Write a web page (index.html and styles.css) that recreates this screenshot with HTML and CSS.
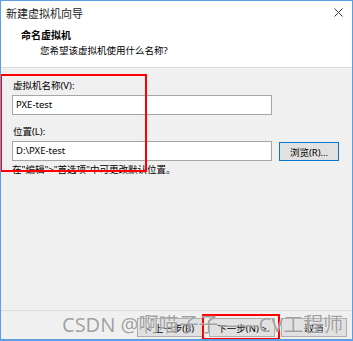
FILE: index.html
```html
<!DOCTYPE html>
<html lang="zh">
<head>
<meta charset="utf-8">
<link rel="stylesheet" href="styles.css">
</head>
<body>
<div class="window">
  <div class="titlebar">
    <span class="title">新建虚拟机向导</span>
    <svg class="close" width="9" height="9" viewBox="0 0 9 9"><path d="M0.5 0.5 L8.5 8.5 M8.5 0.5 L0.5 8.5" stroke="#333" stroke-width="1"/></svg>
  </div>
  <div class="header">
    <div class="h-title">命名虚拟机</div>
    <div class="h-sub">您希望该虚拟机使用什么名称?</div>
  </div>
  <div class="body">
    <div class="label first">虚拟机名称(V):</div>
    <div class="input wide">PXE-test</div>
    <div class="label second">位置(L):</div>
    <div class="row">
      <div class="input wide">D:\PXE-test</div>
      <div class="btn browse">浏览(R)...</div>
    </div>
    <div class="note">在"编辑"&gt;"首选项"中可更改默认位置。</div>
  </div>
  <div class="footer">
    <div class="btn nav">&lt; 上一步(B)</div>
    <div class="btn nav">下一步(N) &gt;</div>
    <div class="btn nav">取消</div>
  </div>
  <div class="mark box1"></div>
  <div class="mark box2"></div>
  <div class="watermark">CSDN @啊喵子子——CV工程师</div>
</div>
</body>
</html>
```
FILE: styles.css
```css
* { box-sizing: border-box; }
html, body { margin: 0; padding: 0; background: #fff; }
body { font-family: "Noto Sans", "Noto Sans CJK SC", sans-serif; font-size: 9.5px; color: #000; }
.window {
  position: relative;
  width: 353px; height: 341px;
  border: 1px solid #5a9fe0;
  border-bottom-width: 2px;
  display: flex; flex-direction: column;
  background: #f0f0f0;
  overflow: hidden;
}
.titlebar {
  height: 23px; background: #fff;
  display: flex; align-items: center; justify-content: space-between;
  padding: 0 9px 0 5px;
}
.title { font-family: "Noto Sans CJK SC", sans-serif; font-size: 11px; line-height: 16px; color: #222; }
.close { display: block; }
.header {
  height: 44px; background: #fff;
  padding: 3px 0 0 20px;
  border-bottom: 1px solid #dadada;
}
.h-title { font-family: "Noto Sans CJK SC", sans-serif; font-weight: bold; font-size: 10px; line-height: 16px; }
.h-sub { font-family: "Noto Sans", "Noto Sans CJK SC", sans-serif; font-size: 9.5px; line-height: 16px; padding-left: 19px; }
.body { flex: 1; padding-left: 11px; }
.label { line-height: 16px; padding-left: 1px; }
.label.first { margin-top: 10px; }
.label.second { margin-top: 9px; }
.input {
  height: 20px; background: #fff;
  border: 1px solid #a6a6a6;
  padding-left: 3px;
  line-height: 18px;
  margin-top: 1px;
}
.input.wide { width: 260px; }
.row { display: flex; align-items: flex-start; margin-top: 1px; }
.row .input { margin-top: 0; }
.btn {
  height: 19px;
  background: #e1e1e1;
  border: 1px solid #adadad;
  display: flex; align-items: center; justify-content: center;
  font-size: 9.5px; color: #000;
}
.browse { width: 60px; margin-left: 7px; margin-top: 1px; border-color: #0078d7; }
.note { line-height: 16px; margin-top: 1px; }
.footer {
  height: 29px;
  border-top: 1px solid #dcdcdc;
  display: flex; justify-content: flex-end; gap: 6px;
  padding: 7px 5px 0 0;
}
.nav { width: 66px; }
.mark { position: absolute; border: 2px solid #ff0000; }
.box1 { left: -1px; top: 73px; width: 147px; height: 98px; }
.box2 { left: 201px; top: 313px; width: 78px; height: 26px; }
.watermark {
  position: absolute; left: 61px; top: 311px;
  font-family: "Noto Sans", "Noto Sans CJK SC", sans-serif;
  font-size: 20px; line-height: 26px;
  color: rgba(120, 120, 120, 0.7);
  white-space: nowrap;
  text-shadow: 0 0 1px #fff;
}
```
